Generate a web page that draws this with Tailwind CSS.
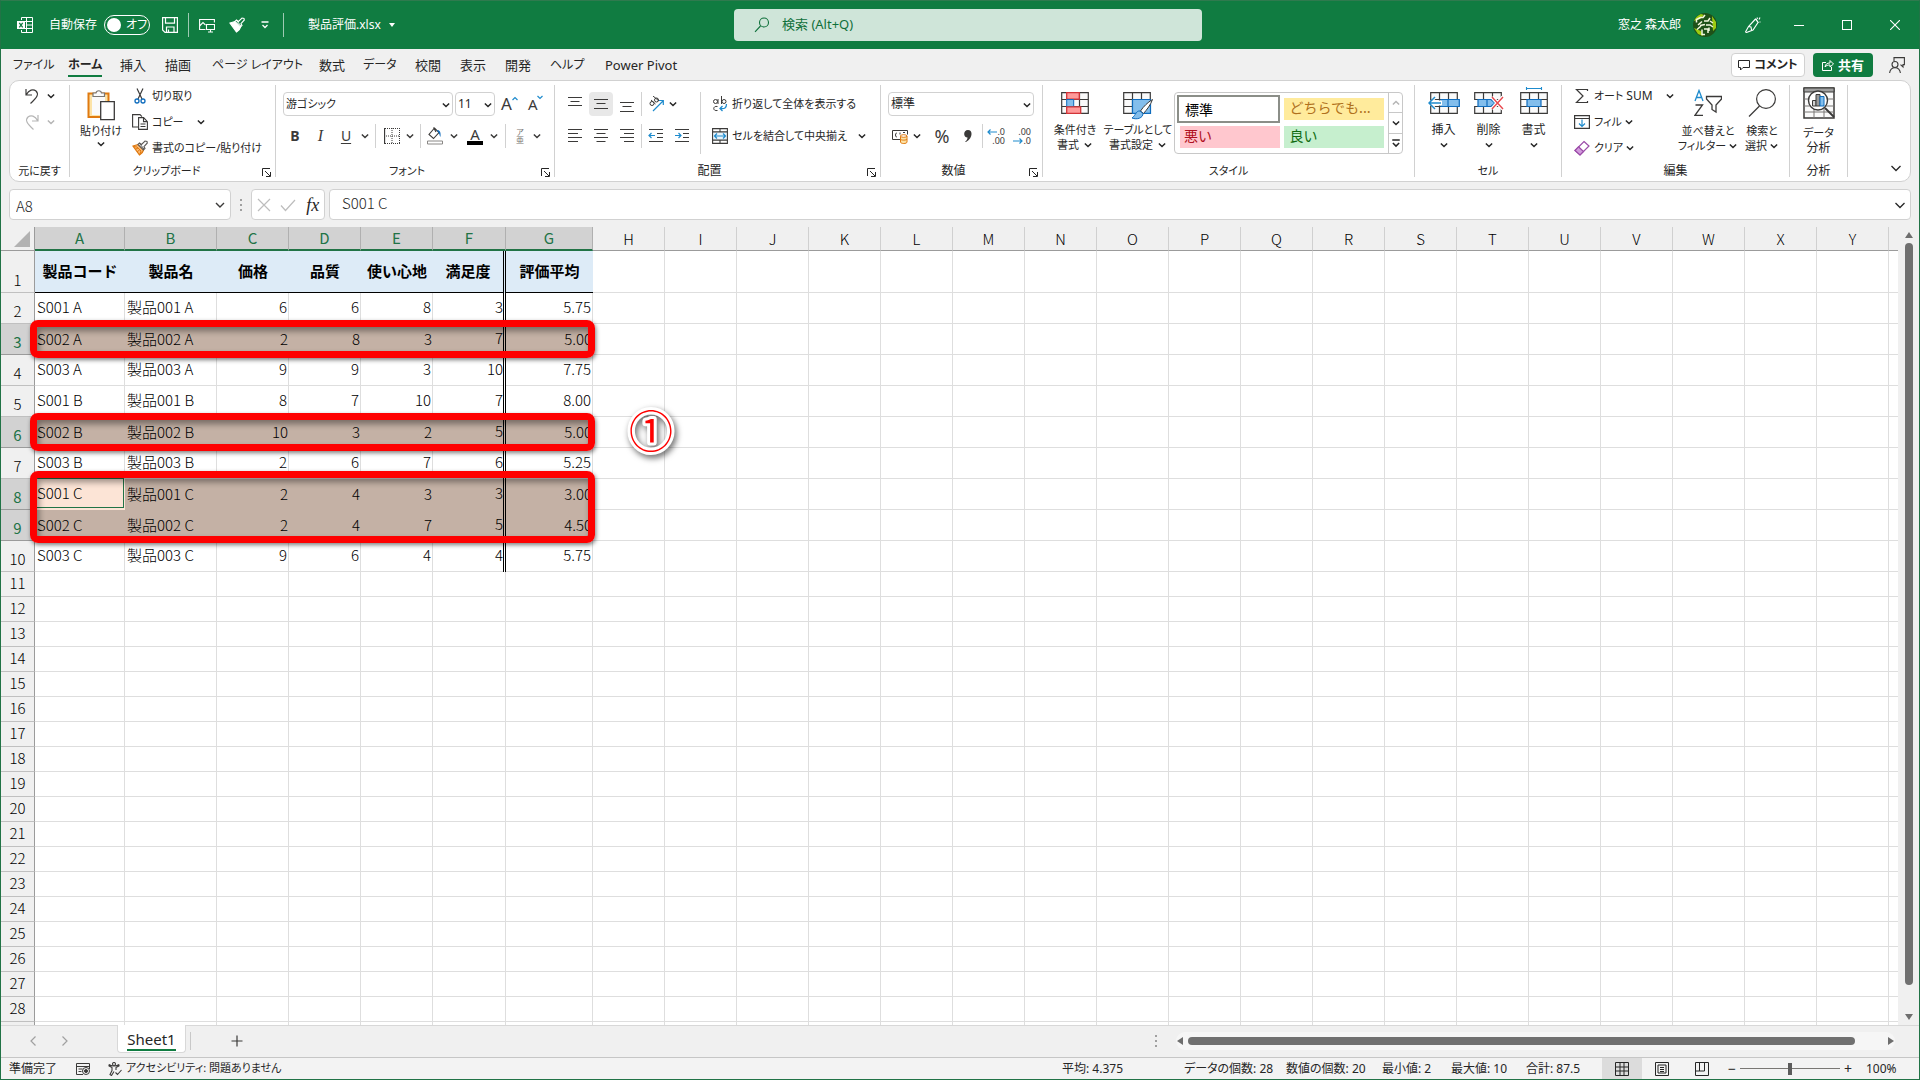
<!DOCTYPE html>
<html lang="ja">
<head>
    <meta charset="UTF-8">
    <meta name="viewport" content="width=device-width, initial-scale=1.0">
    <title>製品評価.xlsx - Excel</title>
    <script src="https://cdn.jsdelivr.net/npm/@tailwindcss/browser@4"></script>
</head>
<body class="h-screen overflow-hidden bg-[#f0f0f0] font-['Noto_Sans','Noto_Sans_CJK_JP',sans-serif] text-xs text-[#262626]">
    <!-- shared symbols -->
    <svg class="hidden">
        <symbol id="chev" viewBox="0 0 8 8"><path d="M1.5 2.8 4 5.2 6.5 2.8" fill="none" stroke="currentColor" stroke-width="1.2"/></symbol>
        <symbol id="launch" viewBox="0 0 9 9"><path d="M.5 8V.5H8M3 3l5 5M8.5 4v4.5H4" fill="none" stroke="currentColor"/></symbol>
        <symbol id="brush" viewBox="0 0 16 16">
            <path d="M6 4.500 1 6l6.500 9c2-1 3.500-3 4-5z" fill="var(--fill)" stroke="var(--brush)" stroke-width="1.200"/>
            <path d="M3 9.500l3-1.500M5 12l3-2.500M1 6.500 5 7l4 4-1.500 4" fill="none" stroke="var(--brush)"/>
            <path d="M6 4.500 7.500 3l2 1.500L13 1l2 .5.3 1.500L12 6.500l1 2L11.500 10z" fill="var(--handle)" stroke="var(--line)" stroke-width="1.100"/>
            <path d="M7.500 3.500l4.500 5.500" stroke="var(--line)"/>
        </symbol>
        <symbol id="grid" viewBox="0 0 28 22"><path d="M.7.7h26.600v20.600H.7zM.7 7.500h26.600M.7 14.500h26.600M9.500.7v20.600M18.500.7v20.600" fill="#fafafa" stroke="#3b3a39" stroke-width="1.2"/></symbol>
    </svg>

    <div class="flex h-full flex-col border border-[#217346] border-t-[#2f7a4e]">
        <!-- title bar -->
        <header class="relative flex h-12 shrink-0 items-center bg-[#107c41] pl-4 text-white">
            <svg class="size-4" viewBox="0 0 16 16" fill="none" stroke="#fff"><path d="M4.500 3V.5h11v15h-11V13M9.500.5v15M4.500 4.500h11M9 8h6.500M4.500 11.500h11"/><path d="M0 4h8v8H0z" fill="#fff" stroke="none"/><path d="M2.300 5.800l3.400 4.600M5.700 5.800l-3.400 4.600" stroke="#107c41" stroke-width="1.3"/></svg>
            <label for="autosave" class="ml-4 w-[55px]">自動保存</label>
            <div class="relative h-5 w-[46px]">
                <input id="autosave" type="checkbox" role="switch" class="h-5 w-[46px] appearance-none rounded-full border border-white">
                <span class="pointer-events-none absolute top-[3px] left-[3px] size-3.5 rounded-full bg-white"></span>
                <span class="pointer-events-none absolute top-0 left-[22px] leading-5 [font-feature-settings:'palt']">オフ</span>
            </div>
            <button class="ml-3" aria-label="上書き保存"><svg class="size-4" viewBox="0 0 16 16" fill="none" stroke="#fff" stroke-width="1.2"><path d="M.6.6h14.800v14.800H3L.6 13zM3.500.6v5.500h9V.6M4.500 15.400V10h7.500v5.400M6.500 15v-2.500"/></svg></button>
            <span class="ml-2.5 h-6 w-px bg-white/60"></span>
            <button class="ml-2.5" aria-label="画像"><svg class="size-4" viewBox="0 0 16 16" fill="none" stroke="#fff" stroke-width="1.1"><path d="M6.500 12.500H.6v-10h14.800v3M.6 9 4 5.500l2.500 2.500"/><path d="M7.500 7.500h8v5h-8zM11.500 12.500v2M9 15h5"/></svg></button>
            <button class="ml-3.5 [--brush:#fff] [--fill:#fff] [--handle:#107c41] [--line:#fff]" aria-label="書式のコピー"><svg class="size-4"><use href="#brush"/></svg></button>
            <button class="ml-4" aria-label="クイック アクセス ツール バーのカスタマイズ"><svg class="size-2" viewBox="0 0 8 8"><path d="M.5 1h7M1.500 4 4 6.500 6.500 4" fill="none" stroke="#fff" stroke-width="1.3"/></svg></button>
            <span class="ml-3.5 h-6 w-px bg-white/60"></span>
            <button class="ml-6 flex items-center gap-2">製品評価.xlsx <svg class="size-1.5" viewBox="0 0 6 4"><path d="M0 0h6L3 4z" fill="#fff"/></svg></button>

            <div class="absolute left-1/2 ml-[-226px] flex h-8 w-[468px] items-center rounded bg-[#cfe5d9] pl-5 text-[#0f703b]">
                <svg class="size-4" viewBox="0 0 16 16" fill="none" stroke="#0f703b" stroke-width="1.1"><circle cx="10" cy="5.500" r="4.500"/><path d="M6.500 9 1 14.800"/></svg>
                <input type="text" aria-label="検索" placeholder="検索 (Alt+Q)" class="ml-3 w-80 bg-transparent text-[13px] outline-none placeholder:text-[#0f703b]">
            </div>

            <div class="ml-auto flex items-center">
                <span class="w-[75px]">窓之 森太郎</span>
                <svg class="size-6" viewBox="0 0 24 24"><circle cx="12" cy="12" r="12" fill="#1f5118"/><path d="M1 8a12 12 0 0 1 7-7l3 1-4 4zM1 15l4 6 5 2-2-5zM19 3l4 6v6l-3 3z" fill="#9dcb10"/><path d="M3.500 9.500V6.500l4-2M7 4.500h3l2-2.500M5 12l4-3.500M11 8h4l2-3M7 12.500l5-1M13 12h4l3 2M17 8l3 2M8 13l-4 3.500M12 21.500H9v-5M11 16h4v4M16 18v-3.500" fill="none" stroke="#f4f8df" stroke-width="1.5"/></svg>
                <button class="ml-7" aria-label="近日公開"><svg class="size-4" viewBox="0 0 16 16" fill="none" stroke="#fff" stroke-width="1.1"><path d="M10.500 2 3.500 9.500l-3 5.500 1 .5L8 13l5-7.500zM3.500 9.500 6 10l.5 3M11 2l2.500 4M12 .5l.5 1.500M15 .5 14 2.500M15.500 5h-1"/></svg></button>
                <button class="ml-3.5 flex h-12 w-12 items-center justify-center" aria-label="最小化"><span class="h-px w-2.5 bg-white"></span></button>
                <button class="flex h-12 w-12 items-center justify-center" aria-label="最大化"><span class="size-2.5 border border-white"></span></button>
                <button class="flex h-12 w-12 items-center justify-center" aria-label="閉じる"><svg class="size-2.5" viewBox="0 0 10 10"><path d="M0 0l10 10M10 0 0 10" stroke="#fff" stroke-width="1.1"/></svg></button>
            </div>
        </header>

        <!-- ribbon tabs -->
        <nav class="flex h-[31px] shrink-0 items-center pl-3 text-[13px] leading-5 whitespace-nowrap [font-feature-settings:'palt']">
            <a href="#" class="w-[55px] text-xs leading-5">ファイル</a>
            <a href="#" class="relative w-[52px] text-xs leading-5 font-bold">ホーム<span class="absolute -bottom-0.5 left-0 h-0.5 w-[34px] bg-[#107c41]"></span></a>
            <a href="#" class="w-[45px]">挿入</a>
            <a href="#" class="w-[47px]">描画</a>
            <a href="#" class="w-[107px] text-xs leading-5">ページ レイアウト</a>
            <a href="#" class="w-11">数式</a>
            <a href="#" class="w-[52px] text-xs leading-5">データ</a>
            <a href="#" class="w-[45px]">校閲</a>
            <a href="#" class="w-[45px]">表示</a>
            <a href="#" class="w-[45px]">開発</a>
            <a href="#" class="w-[55px] text-xs leading-5">ヘルプ</a>
            <a href="#">Power Pivot</a>
            <div class="ml-auto flex items-center pr-3.5 font-bold">
                <button class="flex h-6 w-[74px] items-center justify-center gap-1 rounded border border-[#d1d1d1] bg-white text-xs"><svg class="size-3" viewBox="0 0 12 12" fill="none" stroke="#262626"><path d="M.5 1.500h11v7H5l-2.500 2.500V8.500h-2z"/></svg>コメント</button>
                <button class="ml-2 flex h-6 w-[60px] items-center justify-center gap-1 rounded bg-[#107c41] text-white"><svg class="size-3" viewBox="0 0 12 12" fill="none" stroke="#fff"><path d="M4 3.500H.5v8h9V8M3 8c.5-3 2-4 5-4V1.500L11.500 5 8 8V6C6 6 4 6.500 3 8z"/></svg>共有</button>
                <button class="ml-4" aria-label="共同編集"><svg class="size-4" viewBox="0 0 16 16" fill="none" stroke="#3b3a39" stroke-width="1.1"><path d="M5 4V.6h10.400v7H14V10l-2.500-2.400"/><circle cx="6" cy="7.500" r="3"/><path d="M.6 16c.4-3.500 2.400-5.300 5.400-5.300s5 1.800 5.400 5.300"/></svg></button>
            </div>
        </nav>

        <!-- ribbon -->
        <section class="mx-2 flex h-[102px] shrink-0 rounded-[10px] border border-[#d1d1d1] bg-white pt-1 text-[11px] leading-4 whitespace-nowrap [font-feature-settings:'palt']">
            <div class="flex h-[92px] w-[60px] flex-col border-r border-[#d1d1d1]">
                <div class="flex flex-1 flex-col items-center gap-2 pt-0.5">
                    <button class="flex items-center gap-1.5" aria-label="元に戻す"><svg class="h-4.5 w-4" viewBox="0 0 16 18" fill="none" stroke="#3b3a39" stroke-width="1.2"><path d="M2 2v6h6M2.300 7.600C5 3 9 1.500 12 4c3 3 1.500 6-5.500 12.500"/></svg><svg class="size-2.5"><use href="#chev"/></svg></button>
                    <button class="flex items-center gap-1.5 text-[#b5b5b5]" aria-label="やり直し"><svg class="h-4.5 w-4" viewBox="0 0 16 18" fill="none" stroke="currentColor" stroke-width="1.2"><path d="M14 2v6H8M13.700 7.600C11 3 7 1.500 4 4c-3 3-1.500 6 5.500 12.500"/></svg><svg class="size-2.5"><use href="#chev"/></svg></button>
                </div>
                <div class="text-center leading-3">元に戻す</div>
            </div>

            <div class="flex h-[92px] w-[206px] flex-col border-r border-[#d1d1d1]">
                <div class="flex flex-1">
                    <button class="flex w-[62px] flex-col items-center pt-1">
                        <svg class="h-8 w-7" viewBox="0 0 28 32"><path d="M1.500 4.500h20V28h-20z" fill="#fce3a7" stroke="#e07a10" stroke-width="2"/><path d="M5 7h13v19H5z" fill="#fafafa"/><path d="M6 7.500V4h3c.5-3 5-3 5.500 0h3v3.500z" fill="#fafafa" stroke="#797774" stroke-width="1.2"/><path d="M13.700 12.700h13.600v18H13.700z" fill="#fff" stroke="#3b3a39" stroke-width="1.3"/></svg>
                        <span class="mt-0.5">貼り付け</span>
                        <svg class="size-2.5"><use href="#chev"/></svg>
                    </button>
                    <div class="flex flex-col gap-1">
                        <button class="flex h-[22px] items-center gap-1"><svg class="size-4" viewBox="0 0 16 16" fill="none"><path d="M5 .5 10 11M11 .5 6 11" stroke="#3b3a39" stroke-width="1.2"/><circle cx="5" cy="13" r="2" stroke="#0f6cbd" stroke-width="1.3"/><circle cx="11" cy="13" r="2" stroke="#0f6cbd" stroke-width="1.3"/></svg>切り取り</button>
                        <button class="flex h-[22px] items-center gap-1"><svg class="size-4" viewBox="0 0 16 16" fill="#fff" stroke="#3b3a39" stroke-width="1.1"><path d="M6 13H.6V.6H8l2 2"/><path d="M6.600 3.600h5l3.800 4v7.800H6.600zM11.500 3.600v4h4M8.500 10h5M8.500 12.500h5"/></svg>コピー<svg class="ml-2 size-2.5"><use href="#chev"/></svg></button>
                        <button class="flex h-[22px] items-center gap-1 [--brush:#e07a10] [--fill:#fbb871] [--handle:#fff] [--line:#5c5a58]"><svg class="size-4"><use href="#brush"/></svg>書式のコピー/貼り付け</button>
                    </div>
                </div>
                <div class="relative pr-3 text-center leading-3">クリップボード<button class="absolute right-1 bottom-0" aria-label="クリップボードの設定"><svg class="size-[9px]"><use href="#launch"/></svg></button></div>
            </div>

            <div class="flex h-[92px] w-[279px] flex-col border-r border-[#d1d1d1]">
                <div class="flex flex-1 flex-col pt-[7px]">
                    <div class="flex h-6 items-center pl-[7px]">
                        <div class="relative"><select aria-label="フォント" class="h-6 w-[170px] appearance-none rounded border border-[#d1d1d1] px-0.5"><option>游ゴシック</option></select><svg class="pointer-events-none absolute top-2 right-0.5 size-2.5"><use href="#chev"/></svg></div>
                        <div class="relative ml-0.5"><select aria-label="フォント サイズ" class="h-6 w-10 appearance-none rounded border border-[#d1d1d1] px-0.5 text-xs"><option>11</option></select><svg class="pointer-events-none absolute top-2 right-0.5 size-2.5"><use href="#chev"/></svg></div>
                        <button class="ml-1.5 flex text-[17px] leading-5 text-[#3b3a39]" aria-label="フォント サイズの拡大">A<svg class="mt-0.5 size-1.5" viewBox="0 0 6 6"><path d="M.5 4 3 1.500 5.500 4" fill="none" stroke="#1e8bcd" stroke-width="1.2"/></svg></button>
                        <button class="ml-2.5 flex text-[15px] leading-5 text-[#3b3a39]" aria-label="フォント サイズの縮小">A<svg class="size-1.5" viewBox="0 0 6 6"><path d="M.5 2 3 4.500 5.500 2" fill="none" stroke="#1e8bcd" stroke-width="1.2"/></svg></button>
                    </div>
                    <div class="mt-2 flex h-6 items-center pl-1.5 text-sm text-[#3b3a39]">
                        <button class="w-[26px] font-bold">B</button>
                        <button class="w-[25px] font-['Liberation_Serif',serif] text-base italic">I</button>
                        <button class="w-[26px] underline underline-offset-2">U</button>
                        <svg class="mx-px size-2.5"><use href="#chev"/></svg>
                        <span class="mx-1 h-6 w-px bg-[#d1d1d1]"></span>
                        <button class="w-6 pl-1" aria-label="罫線"><svg class="size-4" viewBox="0 0 16 16" fill="none" stroke="#3b3a39"><path d="M1 .5h15M15.500 0v16M1 15.500h15M8 0v16M0 8h16" stroke-dasharray="1 1"/><path d="M.5 0v16" stroke-width="1.3"/></svg></button>
                        <svg class="mx-px size-2.5"><use href="#chev"/></svg>
                        <span class="mx-1 h-6 w-px bg-[#d1d1d1]"></span>
                        <button class="w-5 pl-0.5" aria-label="塗りつぶしの色"><svg class="h-4.5 w-4" viewBox="0 0 16 18" fill="none"><path d="M7.500 1 2 7.500l4.500 4L12 5.500zM6.500.5 9 5" stroke="#3b3a39" stroke-width="1.1"/><path d="M10 3c3 0 4 2.500 3.500 7-1-1-1-4-2.500-5z" fill="#0f6cbd"/><path d="M.5 14h15v3H.5z" fill="#fff" stroke="#8a8886"/></svg></button>
                        <svg class="mx-1 size-2.5"><use href="#chev"/></svg>
                        <button class="flex w-6 flex-col items-center" aria-label="フォントの色"><span class="text-[15px] leading-[14px]">A</span><span class="h-1 w-4 bg-black"></span></button>
                        <svg class="mx-0.5 size-2.5"><use href="#chev"/></svg>
                        <span class="mx-1 h-6 w-px bg-[#d1d1d1]"></span>
                        <button class="flex w-5 flex-col items-center text-[8px] leading-2 text-[#797774]" aria-label="ふりがな"><span>ア</span><span>亜</span></button>
                        <svg class="mx-0.5 size-2.5"><use href="#chev"/></svg>
                    </div>
                </div>
                <div class="relative pr-4 text-center leading-3">フォント<button class="absolute right-1 bottom-0" aria-label="フォントの設定"><svg class="size-[9px]"><use href="#launch"/></svg></button></div>
            </div>

            <div class="relative flex h-[92px] w-[326px] flex-col border-r border-[#d1d1d1]">
                <div class="flex flex-1 pt-[7px] pl-2">
                    <div class="flex flex-col gap-2">
                        <div class="flex h-6 items-center gap-0.5">
                            <button class="flex size-6 items-center justify-center" aria-label="上揃え"><svg class="size-4" viewBox="0 0 16 16" stroke="#3b3a39"><path d="M1 1.500h14M3.500 5.500h9M1 9.500h14"/></svg></button>
                            <button class="flex size-6 items-center justify-center rounded bg-[#e8e8e8]" aria-label="上下中央揃え"><svg class="size-4" viewBox="0 0 16 16" stroke="#3b3a39"><path d="M1 3.500h14M3.500 7.500h9M1 12.500h14"/></svg></button>
                            <button class="flex size-6 items-center justify-center" aria-label="下揃え"><svg class="size-4" viewBox="0 0 16 16" stroke="#3b3a39"><path d="M1 6.500h14M3.500 10.500h9M1 15.500h14"/></svg></button>
                            <span class="mr-1 h-6 w-px bg-[#d1d1d1]"></span>
                            <button class="flex items-center gap-1" aria-label="方向"><svg class="size-4" viewBox="0 0 16 16" fill="none" stroke="#3b3a39"><circle cx="4" cy="7.500" r="2"/><path d="M3 4l4.500 4"/><circle cx="8.500" cy="4" r="2"/><path d="M5 0l6 5"/><path d="M5 15 15 5M11 4.500h4.300V9" stroke="#1e8bcd" stroke-width="1.2"/></svg><svg class="size-2.5"><use href="#chev"/></svg></button>
                        </div>
                        <div class="flex h-6 items-center gap-0.5">
                            <button class="flex size-6 items-center justify-center" aria-label="左揃え"><svg class="size-4" viewBox="0 0 16 16" stroke="#3b3a39"><path d="M1 1.500h14M1 5.500h10M1 9.500h14M1 13.500h10"/></svg></button>
                            <button class="flex size-6 items-center justify-center" aria-label="中央揃え"><svg class="size-4" viewBox="0 0 16 16" stroke="#3b3a39"><path d="M1 1.500h14M3.500 5.500h9M1 9.500h14M3.500 13.500h9"/></svg></button>
                            <button class="flex size-6 items-center justify-center" aria-label="右揃え"><svg class="size-4" viewBox="0 0 16 16" stroke="#3b3a39"><path d="M1 1.500h14M5 5.500h10M1 9.500h14M5 13.500h10"/></svg></button>
                            <span class="mr-1 h-6 w-px bg-[#d1d1d1]"></span>
                            <button aria-label="インデントを減らす"><svg class="size-4" viewBox="0 0 16 16" fill="none" stroke="#3b3a39"><path d="M1 1.500h14M9 5.500h6M9 9.500h6M1 13.500h14"/><path d="M7 7.500H1M3.500 5 1 7.500 3.500 10" stroke="#1e8bcd" stroke-width="1.2"/></svg></button>
                            <button class="ml-2" aria-label="インデントを増やす"><svg class="size-4" viewBox="0 0 16 16" fill="none" stroke="#3b3a39"><path d="M1 1.500h14M9 5.500h6M9 9.500h6M1 13.500h14"/><path d="M1 7.500h6M4.500 5 7 7.500 4.500 10" stroke="#1e8bcd" stroke-width="1.2"/></svg></button>
                        </div>
                    </div>
                    <span class="ml-2.5 h-[62px] w-px bg-[#d1d1d1]"></span>
                    <div class="ml-auto flex w-[168px] flex-col gap-2">
                        <button class="flex h-6 items-center gap-1"><svg class="size-4" viewBox="0 0 16 16" fill="none" stroke="#3b3a39"><circle cx="3.500" cy="5.500" r="2"/><path d="M6 3v5M9.500 0v8"/><circle cx="12" cy="5.500" r="2"/><path d="M5.500 10.500c-5-1-5 5 0 4"/><path d="M14.500 8c0 4-2 5-6 4.500M10.500 10 8 12.500l2.500 2.500" stroke="#1e8bcd" stroke-width="1.3"/></svg>折り返して全体を表示する</button>
                        <button class="flex h-6 items-center gap-1"><svg class="size-4" viewBox="0 0 16 16" fill="none"><path d="M.6.6h14.800v14.800H.6zM.6 4h14.800M.6 12h14.800M8 .6V4M8 12v3.400" stroke="#3b3a39" stroke-width="1.1"/><path d="M.6 4h14.800v8H.6z" fill="#e8f3fb" stroke="#3b3a39"/><path d="M2.500 8h11M5 5.500 2.500 8 5 10.500M11 5.500 13.500 8 11 10.500" stroke="#1e8bcd" stroke-width="1.2"/></svg>セルを結合して中央揃え<svg class="ml-1.5 size-2.5"><use href="#chev"/></svg></button>
                    </div>
                </div>
                <div class="relative pr-4 text-center text-xs leading-3">配置<button class="absolute right-1 bottom-0" aria-label="配置の設定"><svg class="size-[9px]"><use href="#launch"/></svg></button></div>
            </div>

            <div class="flex h-[92px] w-[162px] flex-col border-r border-[#d1d1d1]">
                <div class="flex flex-1 flex-col gap-2 pt-[7px] pl-[7px]">
                    <div class="relative w-[146px]"><select aria-label="表示形式" class="h-6 w-full appearance-none rounded border border-[#d1d1d1] px-0.5 text-xs"><option>標準</option></select><svg class="pointer-events-none absolute top-2 right-0.5 size-2.5"><use href="#chev"/></svg></div>
                    <div class="flex h-6 items-center pl-1">
                        <button class="flex items-center gap-1" aria-label="通貨表示形式"><svg class="size-4" viewBox="0 0 16 16" fill="none" stroke="#3b3a39"><path d="M8 11.500H.5v-9h15v4M5 5C3 4.500 3 9.500 5 9M8 4.500v2M11 4.500h2"/><path d="M8.500 8v6c0 2 6.500 2 6.500 0V8" fill="#fce3a7" stroke="#e07a10"/><ellipse cx="11.700" cy="8" rx="3.300" ry="1.300" fill="#fff" stroke="#e07a10"/><path d="M8.500 11c0 1.500 6.500 1.500 6.500 0" stroke="#e07a10"/></svg><svg class="size-2.5"><use href="#chev"/></svg></button>
                        <button class="ml-3 w-4 text-lg text-[#3b3a39]">%</button>
                        <button class="ml-3.5" aria-label="桁区切りスタイル"><svg class="h-3 w-2" viewBox="0 0 8 12"><path d="M4 0c5 0 5 8-2 12H1c2-2 2.500-3 2.500-4.500C-1 7.500-1 0 4 0z" fill="#3b3a39"/></svg></button>
                        <span class="mr-1.5 ml-2.5 h-6 w-px bg-[#d1d1d1]"></span>
                        <button class="flex w-4 flex-col text-[9px] leading-[9px] text-[#3b3a39]" aria-label="小数点以下の表示桁数を増やす"><span class="flex items-center justify-end"><svg class="h-1.5 w-2.5 shrink-0" viewBox="0 0 10 6" fill="none" stroke="#1e8bcd"><path d="M1 3h9M3.500.5 1 3l2.500 2.500" stroke-width="1.2"/></svg>.0</span><span class="text-right">.00</span></button>
                        <button class="ml-2.5 flex w-4 flex-col text-[9px] leading-[9px] text-[#3b3a39]" aria-label="小数点以下の表示桁数を減らす"><span class="text-right">.00</span><span class="flex items-center justify-end"><svg class="h-1.5 w-2.5 shrink-0" viewBox="0 0 10 6" fill="none" stroke="#1e8bcd"><path d="M0 3h9M6.500.5 9 3 6.500 5.500" stroke-width="1.2"/></svg>.0</span></button>
                    </div>
                </div>
                <div class="relative pr-4 text-center text-xs leading-3">数値<button class="absolute right-1 bottom-0" aria-label="表示形式の設定"><svg class="size-[9px]"><use href="#launch"/></svg></button></div>
            </div>

            <div class="flex h-[92px] w-[372px] flex-col border-r border-[#d1d1d1]">
                <div class="flex flex-1 pt-[7px] pl-0.5">
                    <button class="flex w-[60px] flex-col items-center leading-[15px]">
                        <svg class="h-[22px] w-7" viewBox="0 0 28 22"><use href="#grid"/><path d="M5.700.7h12.600v6.500H5.700z" fill="#ff9a9a" stroke="#d13438" stroke-width="1.3"/><path d="M5.700 7.500h7v7h-7z" fill="#83beec" stroke="#0f6cbd"/><path d="M5.700 14.800h14v6.500h-14z" fill="#ff9a9a" stroke="#d13438" stroke-width="1.3"/></svg>
                        <span class="mt-2">条件付き</span>
                        <span class="flex items-center gap-1">書式 <svg class="size-2.5"><use href="#chev"/></svg></span>
                    </button>
                    <button class="flex w-[66px] flex-col items-center leading-[15px]">
                        <svg class="h-[28px] w-[30px]" viewBox="0 0 30 28"><use href="#grid" width="28" height="22"/><path d="M9.500 7.500h18v13.800h-18z" fill="#83beec" stroke="#0f6cbd" stroke-width="1.2"/><path d="M29.500 7.500c-5 3-9 7-12 11.500l3 2.500c3.500-4 7-8.500 9-14z" fill="#fff" stroke="#3b3a39"/><path d="M17 19c-4-.5-4 4-8 7 5 2 11 0 11-4.500z" fill="#83beec" stroke="#0f6cbd"/></svg>
                        <span class="mt-0.5">テーブルとして</span>
                        <span class="flex items-center gap-1">書式設定 <svg class="size-2.5"><use href="#chev"/></svg></span>
                    </button>
                    <div class="ml-[3px] flex h-[62px] w-[229px] rounded border border-[#c8c8c8] font-['Noto_Sans_CJK_JP',sans-serif] [font-feature-settings:normal]">
                        <div class="grid flex-1 grid-cols-2 content-start gap-x-1 gap-y-[3px] p-0.5 text-left text-sm leading-4">
                            <button class="h-7 border-2 border-[#8b8e88] pl-1.5 text-left text-black">標準</button>
                            <button class="mt-[3px] h-[22px] w-[100px] bg-[#ffeb9c] pb-1 pl-1.5 text-left text-[#b0711d]">どちらでも...</button>
                            <button class="ml-[3px] h-[22px] w-[100px] bg-[#ffc7ce] pb-1 pl-1 text-left text-[#b01020]">悪い</button>
                            <button class="h-[22px] w-[100px] bg-[#c6efce] pb-1 pl-1.5 text-left text-[#106b10]">良い</button>
                        </div>
                        <div class="flex w-3.5 flex-col divide-y divide-[#c8c8c8] border-l border-[#c8c8c8]">
                            <button class="flex flex-1 items-center justify-center text-[#b5b5b5]" aria-label="前へ"><svg class="size-2.5 rotate-180"><use href="#chev"/></svg></button>
                            <button class="flex flex-1 items-center justify-center" aria-label="次へ"><svg class="size-2.5"><use href="#chev"/></svg></button>
                            <button class="flex flex-1 items-center justify-center" aria-label="その他"><svg class="size-2.5" viewBox="0 0 8 8"><path d="M1 1.500h6M1.500 4 4 6.500 6.500 4" fill="none" stroke="#262626" stroke-width="1.2"/></svg></button>
                        </div>
                    </div>
                </div>
                <div class="text-center leading-3">スタイル</div>
            </div>

            <div class="flex h-[92px] w-[147px] flex-col border-r border-[#d1d1d1]">
                <div class="flex flex-1 pl-1.5 text-xs">
                    <button class="flex w-[45px] flex-col items-center pt-[7px]">
                        <svg class="h-[22px] w-8" viewBox="0 0 32 22"><use href="#grid" x="2" width="28" height="22"/><path d="M13 7.500h18.300v7H13zM20 7.500v7" fill="#83beec" stroke="#0f6cbd" stroke-width="1.2"/><path d="M14 8.500v5H6l2.500 3L7 18 0 11l7-7 1.500 1.500L6 8.500z" fill="#fff"/><path d="M13 11H1M7 5l-6 6 6 6" fill="none" stroke="#1e8bcd" stroke-width="1.5"/></svg>
                        <span class="mt-2">挿入</span><svg class="mt-0.5 size-2.5"><use href="#chev"/></svg>
                    </button>
                    <button class="flex w-[45px] flex-col items-center pt-[7px]">
                        <svg class="h-[22px] w-8" viewBox="0 0 32 22"><use href="#grid" x="1" width="28" height="22"/><path d="M0 8h4v6H0zM22 8h10v6H22z" fill="#fff"/><path d="M5 7.500h13l4 3.500-4 3.500H5zM14 7.500v7" fill="#83beec" stroke="#0f6cbd" stroke-width="1.2"/><path d="M19 5l11 12M30 5 19 17" stroke="#fff" stroke-width="4"/><path d="M19 5l11 12M30 5 19 17" stroke="#e8484e" stroke-width="1.4"/></svg>
                        <span class="mt-2">削除</span><svg class="mt-0.5 size-2.5"><use href="#chev"/></svg>
                    </button>
                    <button class="flex w-[45px] flex-col items-center pt-0.5">
                        <svg class="h-[27px] w-7" viewBox="0 0 28 27"><use href="#grid" y="5" width="28" height="22"/><path d="M7 12.500h14v7H7z" fill="#83beec" stroke="#0f6cbd" stroke-width="1.2"/><path d="M6.500 0v3M21.500 0v3M6.500 1.500h15" stroke="#1e8bcd" stroke-width="1.1"/></svg>
                        <span class="mt-2">書式</span><svg class="mt-0.5 size-2.5"><use href="#chev"/></svg>
                    </button>
                </div>
                <div class="text-center leading-3">セル</div>
            </div>

            <div class="flex h-[92px] w-[228px] flex-col border-r border-[#d1d1d1]">
                <div class="flex flex-1 pl-3">
                    <div class="flex w-[104px] flex-col gap-1">
                        <button class="flex h-[22px] items-center gap-1"><svg class="size-4" viewBox="0 0 16 16" fill="none" stroke="#3b3a39" stroke-width="1.2"><path d="M13.500 3V1.500H2.500L9 8l-6.500 6.500h11V13"/></svg><span>オート <span class="text-xs">SUM</span></span><svg class="ml-2 size-2.5"><use href="#chev"/></svg></button>
                        <button class="flex h-[22px] items-center gap-1"><svg class="size-4" viewBox="0 0 16 16" fill="none" stroke="#3b3a39" stroke-width="1.2"><path d="M.6 1.600h14.800v12.800H.6zM.6 4.500h14.800"/><path d="M8 5.500v7M5 9.500l3 3 3-3" stroke="#1e8bcd"/></svg>フィル<svg class="-ml-0.5 size-2.5"><use href="#chev"/></svg></button>
                        <button class="flex h-[22px] items-center gap-1"><svg class="size-4" viewBox="0 0 16 16" fill="#fff" stroke="#9b4ba8" stroke-width="1.2"><path d="M10 1.500 15 6l-9 9-5-4.500z"/><path d="M4.500 6.800 9.500 11.500 6 15l-5-4.500z" fill="#d29bdc"/></svg>クリア<svg class="-ml-0.5 size-2.5"><use href="#chev"/></svg></button>
                    </div>
                    <button class="flex w-[60px] flex-col items-center pt-1 leading-[15px]">
                        <svg class="h-7 w-7" viewBox="0 0 28 28" fill="none"><path d="M1 12 5 1.500 9 12M2.500 8.500h5" stroke="#1e8bcd" stroke-width="1.3"/><path d="M1.500 16h7l-7.500 10.300h8M12.500 7.500h15v2.500L22 16v7l-4-2.500V16l-5.500-6z" stroke="#3b3a39" stroke-width="1.3"/></svg>
                        <span class="mt-1.5">並べ替えと</span><span class="flex items-center gap-0.5">フィルター <svg class="size-2.5"><use href="#chev"/></svg></span>
                    </button>
                    <button class="flex w-[48px] flex-col items-center pt-1 leading-[15px]">
                        <svg class="h-7 w-7" viewBox="0 0 28 28" fill="none" stroke="#3b3a39" stroke-width="1.2"><circle cx="18" cy="10" r="9.400"/><path d="M11.500 17 1 27.500"/></svg>
                        <span class="mt-1.5">検索と</span><span class="flex items-center gap-0.5">選択 <svg class="size-2.5"><use href="#chev"/></svg></span>
                    </button>
                </div>
                <div class="text-center text-xs leading-3">編集</div>
            </div>

            <div class="flex h-[92px] w-[58px] flex-col border-r border-[#d1d1d1]">
                <button class="flex flex-1 flex-col items-center pt-0.5 text-xs leading-[15px]">
                    <svg class="h-8 w-8" viewBox="0 0 32 32" fill="none" stroke="#3b3a39"><path d="M1 1h30v30H1z" fill="#fafafa" stroke-width="1.5"/><path d="M1 1h30v4H1z" fill="#a0a0a0"/><path d="M1 12h30M1 19h30M1 25h30M11 19v12M21 19v12" stroke="#797774"/><circle cx="15" cy="13.500" r="9.500" fill="#fff" stroke-width="1.4"/><path d="M22 21l9 9" stroke-width="2"/><path d="M9.500 13.500h3.500V19H9.500z" fill="#d1d1d1"/><path d="M13 7.500h4V19h-4z" fill="#9a9a9a"/><path d="M17 9.500h4V19h-4z" fill="#83beec" stroke="#0f6cbd"/></svg>
                    <span class="mt-1.5 text-[11px]">データ</span><span>分析</span>
                </button>
                <div class="text-center text-xs leading-3">分析</div>
            </div>
            <div class="flex flex-1 items-end justify-end pr-2 pb-2"><button aria-label="リボンを折りたたむ"><svg class="h-2.5 w-3" viewBox="0 0 12 10"><path d="M1.500 3 6 7.500 10.500 3" fill="none" stroke="#262626" stroke-width="1.3"/></svg></button></div>
        </section>

        <!-- formula bar -->
        <section class="mx-2 mt-[7px] flex h-[31px] shrink-0 font-['Noto_Sans_CJK_JP',sans-serif] text-[15px] font-light">
            <div class="relative flex w-[222px] items-center rounded border border-[#d1d1d1] bg-white">
                <input type="text" aria-label="名前ボックス" value="A8" class="w-full bg-transparent pt-0.5 pl-1.5 outline-none">
                <svg class="absolute right-1 h-2.5 w-3" viewBox="0 0 12 10"><path d="M2 3l4 4 4-4" fill="none" stroke="#3b3a39" stroke-width="1.4"/></svg>
            </div>
            <svg class="mx-2 h-3 w-1 self-center" viewBox="0 0 4 12"><path d="M1 0h2v2H1zM1 5h2v2H1zM1 10h2v2H1z" fill="#a0a0a0"/></svg>
            <div class="flex w-[74px] items-center justify-around rounded border border-[#d1d1d1] bg-white">
                <button aria-label="キャンセル"><svg class="size-3.5" viewBox="0 0 14 14"><path d="M1 1l12 12M13 1 1 13" stroke="#bdbdbd" stroke-width="1.2"/></svg></button>
                <button aria-label="入力"><svg class="h-3.5 w-4" viewBox="0 0 16 14"><path d="M1 7.500 5.500 12.500 15 2" fill="none" stroke="#bdbdbd" stroke-width="1.2"/></svg></button>
                <button class="font-['Liberation_Serif',serif] text-lg leading-5 font-normal text-[#262626] italic" aria-label="関数の挿入">fx</button>
            </div>
            <div class="relative ml-1 flex flex-1 items-center rounded border border-[#d1d1d1] bg-white">
                <input type="text" aria-label="数式バー" value="S001 C" class="w-full bg-transparent pb-1 pl-3 outline-none">
                <svg class="absolute right-1 h-2.5 w-3" viewBox="0 0 12 10"><path d="M1.500 3 6 7.500 10.500 3" fill="none" stroke="#262626" stroke-width="1.3"/></svg>
            </div>
        </section>

        <!-- worksheet -->
        <main class="mt-[7px] flex min-h-0 flex-1">
            <div class="relative flex-1 overflow-hidden bg-white font-['Noto_Sans_CJK_JP',sans-serif] text-[15px] leading-5 text-black">
                <table class="w-[1960px] table-fixed border-separate border-spacing-0 font-light">
                    <colgroup id="cols">
                        <col class="w-[34px]"><col class="w-[90px]"><col class="w-[92px]"><col class="w-[72px]"><col class="w-[72px]"><col class="w-[72px]"><col class="w-[73px]"><col class="w-[87px]">
                    </colgroup>
                    <thead><tr id="letters"></tr></thead>
                    <tbody id="rows"></tbody>
                </table>
                <!-- highlight frames -->
                <div class="absolute top-[93px] left-[29px] h-[38px] w-[565px] rounded-lg border-7 border-[#fe0000] shadow-[1px_2px_4px_rgba(0,0,0,0.5),inset_2px_4px_6px_rgba(0,0,0,0.4)]"></div>
                <div class="absolute top-[186px] left-[29px] h-[38px] w-[565px] rounded-lg border-7 border-[#fe0000] shadow-[1px_2px_4px_rgba(0,0,0,0.5),inset_2px_4px_6px_rgba(0,0,0,0.4)]"></div>
                <div class="absolute top-[244px] left-[29px] h-[72px] w-[565px] rounded-lg border-7 border-[#fe0000] shadow-[1px_2px_4px_rgba(0,0,0,0.5),inset_2px_4px_6px_rgba(0,0,0,0.4)]"></div>
                <svg class="absolute top-[175px] left-[620px] size-[60px] overflow-visible drop-shadow-[2px_3px_3px_rgba(0,0,0,0.6)]" viewBox="0 0 60 60">
                    <text x="30" y="46" text-anchor="middle" class="font-['Noto_Sans_CJK_JP',sans-serif] text-[44px] font-normal" fill="#fe0000" stroke="#fff" stroke-width="6" stroke-linejoin="round" paint-order="stroke">①</text>
                </svg>
            </div>
            <!-- vertical scroll bar -->
            <div class="flex w-[21px] flex-col items-center py-1">
                <svg class="h-2 w-2.5" viewBox="0 0 10 8"><path d="M5 1l4 6H1z" fill="#6e6e6e"/></svg>
                <div class="mt-1 mb-7 w-2 flex-1 rounded-full bg-[#707070]"></div>
                <svg class="h-2 w-2.5" viewBox="0 0 10 8"><path d="M5 7l4-6H1z" fill="#6e6e6e"/></svg>
            </div>
        </main>

        <!-- sheet tabs -->
        <nav class="flex h-8 shrink-0 items-center border-t border-[#d8d8d8] pb-0.5">
            <button class="ml-7" aria-label="前のシート"><svg class="h-2.5 w-2" viewBox="0 0 8 10"><path d="M6.500.5 2 5l4.500 4.500" fill="none" stroke="#a0a0a0" stroke-width="1.2"/></svg></button>
            <button class="ml-6" aria-label="次のシート"><svg class="h-2.5 w-2" viewBox="0 0 8 10"><path d="M1.500.5 6 5 1.500 9.500" fill="none" stroke="#a0a0a0" stroke-width="1.2"/></svg></button>
            <a href="#" class="-mt-px ml-12 flex h-7 w-[69px] justify-center self-start rounded-b border-x border-b border-[#d8d8d8] bg-white"><span class="h-[26px] border-b-2 border-[#107c41] text-[15px] leading-7">Sheet1</span></a>
            <span class="ml-1 h-[18px] w-px bg-[#c8c8c8]"></span>
            <button class="ml-[38px] size-4" aria-label="新しいシート"><svg class="mx-auto size-3" viewBox="0 0 12 12"><path d="M6 .5v11M.5 6h11" stroke="#3b3a39" stroke-width="1.2"/></svg></button>
            <div class="ml-auto flex items-center pr-6">
                <svg class="mr-4.5 h-3 w-1" viewBox="0 0 4 12"><path d="M1 0h2v2H1zM1 5h2v2H1zM1 10h2v2H1z" fill="#a0a0a0"/></svg>
                <div class="flex h-4.5 items-center rounded-full bg-[#f6f6f6]">
                    <svg class="mr-1 h-2.5 w-2" viewBox="0 0 8 10"><path d="M1 5l6-4v8z" fill="#6e6e6e"/></svg>
                    <div class="h-2 w-[667px] rounded-full bg-[#707070]"></div>
                    <svg class="ml-8 h-2.5 w-2" viewBox="0 0 8 10"><path d="M7 5 1 1v8z" fill="#6e6e6e"/></svg>
                </div>
            </div>
        </nav>

        <!-- status bar -->
        <footer class="flex h-[22px] shrink-0 items-center border-t border-[#c6c6c6] bg-[#f3f3f3] pl-2 whitespace-nowrap [font-feature-settings:'palt']">
            <span class="w-[67px]">準備完了</span>
            <svg class="h-3 w-3.5" viewBox="0 0 14 12" fill="none" stroke="#3b3a39"><path d="M7 11.500H.5V.5h13V6M.5 3.500h13M2.500 6h4M2.500 8.500h3"/><circle cx="10" cy="8" r="3.500"/><circle cx="10" cy="8" r="1.500" fill="#3b3a39"/></svg>
            <svg class="ml-4.5 size-3.5 shrink-0" viewBox="0 0 14 14" fill="none" stroke="#3b3a39" stroke-width="1.1"><circle cx="6" cy="2" r="1.500"/><path d="M1 2.500c2 2 8 2 10 0M1 2.500v1.500l3 1.500v3l-2 4 1.500 1 2.500-4M11 2.500v1.500L8 5.500V8M7.500 10.500l2 2 4-4.500"/></svg>
            <span class="ml-1 text-[11px]">アクセシビリティ: 問題ありません</span>
            <div class="ml-auto flex items-center">
                <span class="w-[122px]">平均: 4.375</span>
                <span class="w-[102px]">データの個数: 28</span>
                <span class="w-24">数値の個数: 20</span>
                <span class="w-[69px]">最小値: 2</span>
                <span class="w-[75px]">最大値: 10</span>
                <span class="w-[76px]">合計: 87.5</span>
                <button class="flex h-[21px] w-10 items-center justify-center bg-[#dcdcdc]" aria-label="標準"><svg class="size-3.5" viewBox="0 0 14 14"><path d="M.5.5h13v13H.5zM.5 5h13M.5 9h13M5 .5v13M9 .5v13" fill="none" stroke="#262626"/></svg></button>
                <button class="flex w-10 justify-center" aria-label="ページ レイアウト"><svg class="size-3.5" viewBox="0 0 14 14"><path d="M.5.5h13v13H.5zM3 3h8v8H3zM5 5.500h4M5 7.500h4M5 9.500h4" fill="none" stroke="#262626"/></svg></button>
                <button class="flex w-10 justify-center" aria-label="改ページ プレビュー"><svg class="size-3.5" viewBox="0 0 14 14"><path d="M.5.5h13v13H.5zM4.500.5V9M9.500.5V9M.5 9h9" fill="none" stroke="#262626"/></svg></button>
                <button class="ml-0.5 w-4 text-center text-sm leading-4">−</button>
                <input type="range" aria-label="ズーム" min="10" max="190" value="100" class="h-3 w-[100px] appearance-none bg-[linear-gradient(#797774,#797774)] bg-[length:100%_1px] bg-center bg-no-repeat [&::-webkit-slider-thumb]:h-3 [&::-webkit-slider-thumb]:w-1 [&::-webkit-slider-thumb]:appearance-none [&::-webkit-slider-thumb]:bg-[#5c5c5c]">
                <button class="w-4 text-center text-sm leading-4">+</button>
                <span class="ml-2.5 w-[53px]">100%</span>
            </div>
        </footer>
    </div>

    <script>
        const letters = 'ABCDEFGHIJKLMNOPQRSTUVWXY'.split('').concat('');
        const titles = ['製品コード', '製品名', '価格', '品質', '使い心地', '満足度', '評価平均'];
        const data = [
            ['S001 A', '製品001 A', 6, 6, 8, 3, '5.75'],
            ['S002 A', '製品002 A', 2, 8, 3, 7, '5.00'],
            ['S003 A', '製品003 A', 9, 9, 3, 10, '7.75'],
            ['S001 B', '製品001 B', 8, 7, 10, 7, '8.00'],
            ['S002 B', '製品002 B', 10, 3, 2, 5, '5.00'],
            ['S003 B', '製品003 B', 2, 6, 7, 6, '5.25'],
            ['S001 C', '製品001 C', 2, 4, 3, 3, '3.00'],
            ['S002 C', '製品002 C', 2, 4, 7, 5, '4.50'],
            ['S003 C', '製品003 C', 9, 6, 4, 4, '5.75']
        ];
        const selected = [3, 6, 8, 9];
        const lastRow = 28;

        for (let i = 7; i < letters.length; i++) {
            document.getElementById('cols').insertAdjacentHTML('beforeend', '<col class="w-[72px]">');
        }

        let head = '<th class="h-6 border-r border-b border-[#9b9b9b] bg-[#f0f0f0]"><svg class="ml-auto mr-1 size-4" viewBox="0 0 16 16"><path d="M16 0v16H0z" fill="#b2b2b2"/></svg></th>';
        letters.forEach((l, i) => {
            head += i < 7
                ? `<th class="h-6 border-r border-b-2 border-r-[#b0b0b0] border-b-[#217346] bg-[#d2d2d2] font-normal text-[#217346]">${l}</th>`
                : `<th class="h-6 border-r border-b border-r-[#d0d0d0] border-b-[#9b9b9b] bg-[#f0f0f0] font-light">${l}</th>`;
        });
        document.getElementById('letters').innerHTML = head;

        function numberCell(n) {
            const label = n > lastRow ? '' : n;
            if (selected.includes(n)) {
                return `<th class="border-r border-b border-[#9b9b9b] bg-[#d2d2d2] pb-0.5 align-bottom font-normal text-[#217346]">${label}</th>`;
            }
            return n > 10
                ? `<th class="h-[25px] border-r border-b border-r-[#9b9b9b] border-b-[#c0c0c0] bg-[#f0f0f0] pb-0.5 font-light">${label}</th>`
                : `<th class="border-r border-b border-r-[#9b9b9b] border-b-[#c0c0c0] bg-[#f0f0f0] pb-0.5 align-bottom font-light">${label}</th>`;
        }

        function dataCell(n, i, value) {
            let cls = i < 2 ? 'pb-0.5 pl-0.5 text-left' : 'pb-0.5 pr-px text-right';
            if (i === 5) cls = 'border-r-3 border-double border-black pb-[3px] text-right';
            if (n === 8 && i === 0) return `<td class="relative bg-[#fce4d6] pb-[3px] pl-0.5"><span class="absolute -top-px left-0 h-7.5 w-[89px] border border-[#217346]"></span>${value}</td>`;
            if (selected.includes(n)) return `<td class="${cls} bg-[#c4b1a5]">${value}</td>`;
            return i === 5
                ? `<td class="${cls} bg-[linear-gradient(#dedede,#dedede)] bg-[length:100%_1px] bg-bottom bg-no-repeat">${value}</td>`
                : `<td class="${cls} border-r border-b border-[#dedede]">${value}</td>`;
        }

        let html = '';
        for (let n = 1; n <= lastRow + 1; n++) {
            html += n === 1 ? '<tr class="h-[42px]">' : n < 11 ? '<tr class="h-[31px]">' : '<tr class="h-[25px]">';
            html += numberCell(n);
            letters.forEach((l, i) => {
                if (i < 7 && n === 1) {
                    html += i === 5
                        ? `<td class="border-r-3 border-double border-black bg-[#ddebf7] pb-0.5 text-center font-bold shadow-[inset_0_-1px_0_#000]">${titles[i]}</td>`
                        : `<td class="border-b border-black bg-[#ddebf7] pb-0.5 text-center font-bold">${titles[i]}</td>`;
                } else if (i < 7 && n < 11) {
                    html += dataCell(n, i, data[n - 2][i]);
                } else {
                    html += '<td class="border-r border-b border-[#dedede]"></td>';
                }
            });
            html += '</tr>';
        }
        document.getElementById('rows').innerHTML = html;
    </script>
</body>
</html>
